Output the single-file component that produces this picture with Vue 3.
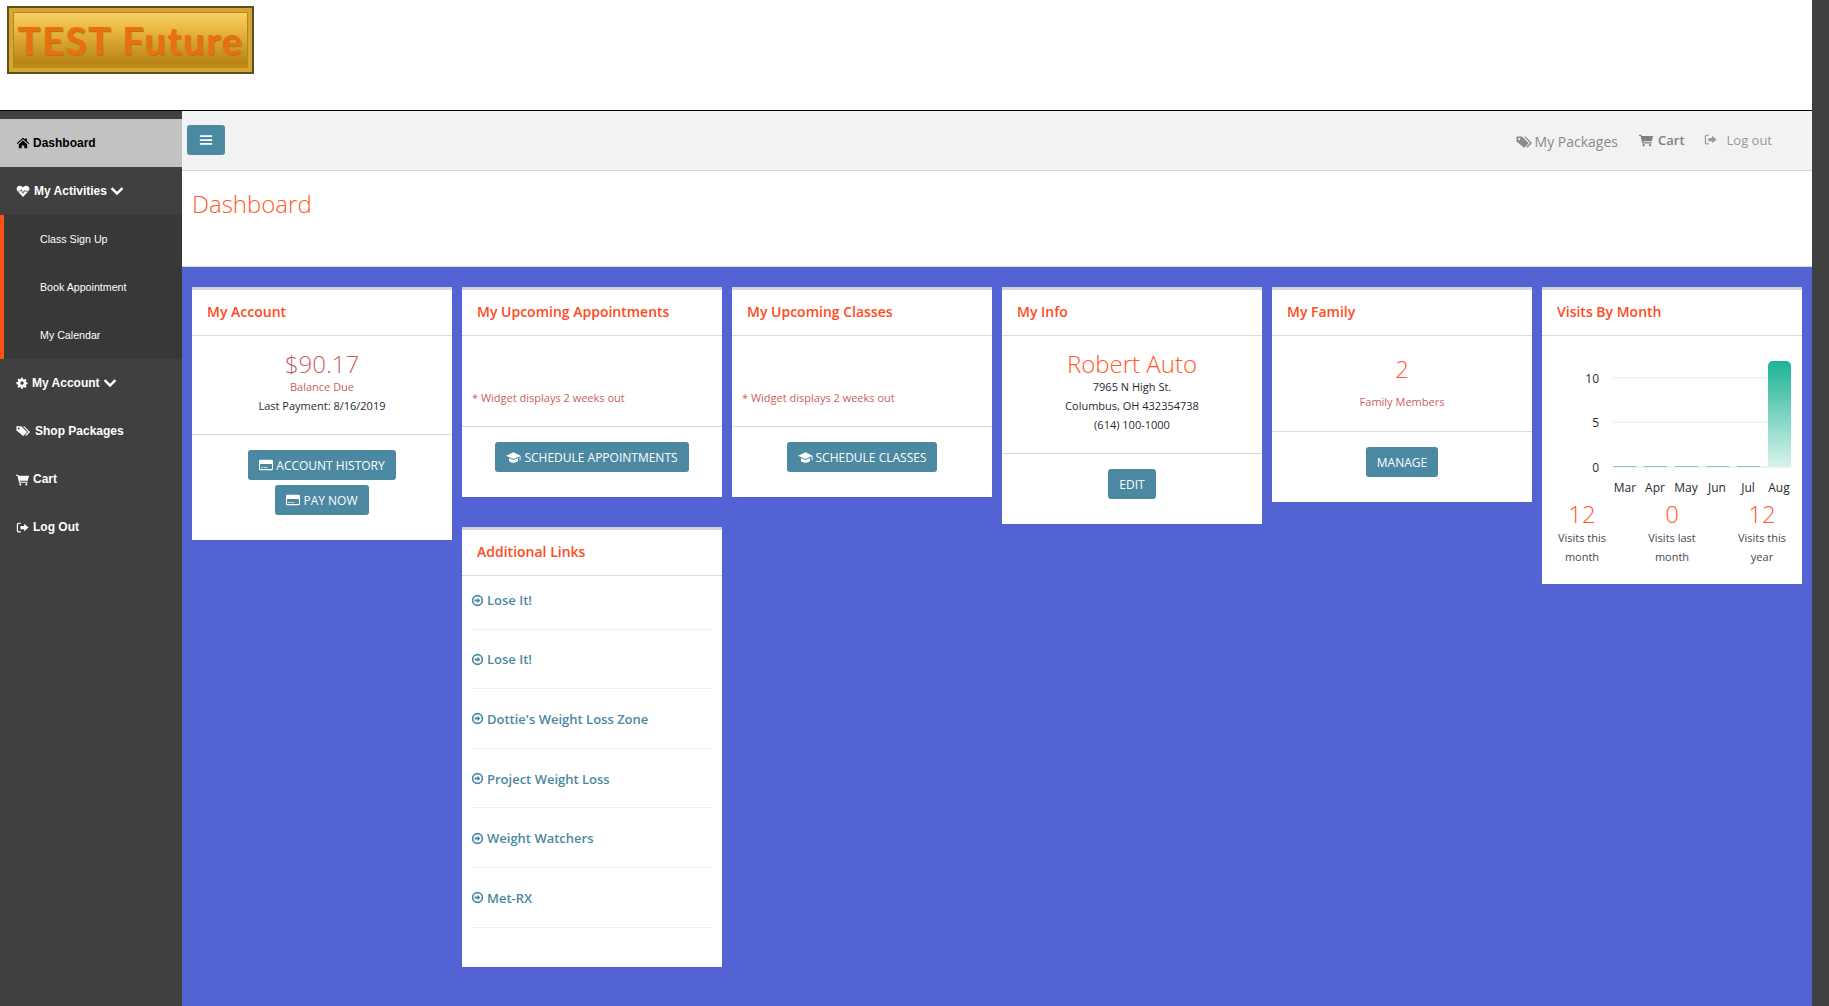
<template>
  <div class="page">
    <div class="main">
      <header class="brand">
        <div class="logo"><span>TEST Future</span></div>
      </header>

      <div class="shell">
        <aside class="sidebar">
          <a class="side-item active">
            <svg class="side-icon" viewBox="0 0 16 16"><path :d="icons.home" /></svg>
            <span>Dashboard</span>
          </a>
          <a class="side-item">
            <svg class="side-icon" viewBox="0 0 16 16"><path :d="icons.heartbeat" /></svg>
            <span>My Activities</span>
            <svg class="chevron" viewBox="0 0 16 16"><path :d="icons.chevron" /></svg>
          </a>
          <div class="submenu">
            <a v-for="item in subItems" :key="item" class="sub-item">{{ item }}</a>
          </div>
          <a class="side-item gap-account">
            <svg class="side-icon" viewBox="0 0 16 16"><path :d="icons.cog" /></svg>
            <span>My Account</span>
            <svg class="chevron" viewBox="0 0 16 16"><path :d="icons.chevron" /></svg>
          </a>
          <a class="side-item gap-shop">
            <svg class="side-icon" viewBox="0 0 16 16"><path :d="icons.tags" /></svg>
            <span>Shop Packages</span>
          </a>
          <a class="side-item gap-small">
            <svg class="side-icon" viewBox="0 0 16 16"><path :d="icons.cart" /></svg>
            <span>Cart</span>
          </a>
          <a class="side-item gap-small">
            <svg class="side-icon" viewBox="0 0 16 16"><path :d="icons.signOut" /></svg>
            <span>Log Out</span>
          </a>
        </aside>

        <div class="content">
          <div class="topbar">
            <button class="toggle">
              <svg viewBox="0 0 16 16" width="14" height="14"><path d="M1 2.500h14v2H1zM1 7h14v2H1zM1 11.500h14v2H1z" /></svg>
            </button>
            <nav class="top-nav">
              <a class="top-link packages">
                <svg viewBox="0 0 16 16" width="16" height="16"><path :d="icons.tags" /></svg>
                My Packages
              </a>
              <a class="top-link cart">
                <svg viewBox="0 0 16 16" width="14" height="14"><path :d="icons.cart" /></svg>
                <b>Cart</b>
              </a>
              <a class="top-link logout">
                <svg viewBox="0 0 16 16" width="13" height="13"><path :d="icons.signOut" /></svg>
                <span>Log out</span>
              </a>
            </nav>
          </div>

          <div class="title-bar">
            <h1>Dashboard</h1>
          </div>

          <div class="board">
            <div class="col">
              <section class="card">
                <h3>My Account</h3>
                <div class="card-body center account-body">
                  <div class="big muted">$90.17</div>
                  <div class="small muted">Balance Due</div>
                  <div class="small">Last Payment: 8/16/2019</div>
                </div>
                <div class="card-foot">
                  <button class="btn">
                    <svg viewBox="0 0 16 16"><path :d="icons.card" /></svg>ACCOUNT HISTORY
                  </button>
                  <button class="btn">
                    <svg viewBox="0 0 16 16"><path :d="icons.card" /></svg>PAY NOW
                  </button>
                </div>
              </section>
            </div>

            <div class="col">
              <section class="card">
                <h3>My Upcoming Appointments</h3>
                <div class="card-body note-body">
                  <div class="small muted">* Widget displays 2 weeks out</div>
                </div>
                <div class="card-foot">
                  <button class="btn cap-btn">
                    <svg viewBox="0 0 16 16"><path :d="icons.cap" /></svg>SCHEDULE APPOINTMENTS
                  </button>
                </div>
              </section>

              <section class="card links-card">
                <h3>Additional Links</h3>
                <div class="links">
                  <a v-for="(link, i) in links" :key="i" class="link-row">
                    <svg viewBox="0 0 16 16"><path :d="icons.arrowCircle" /></svg>{{ link }}
                  </a>
                </div>
              </section>
            </div>

            <div class="col">
              <section class="card">
                <h3>My Upcoming Classes</h3>
                <div class="card-body note-body">
                  <div class="small muted">* Widget displays 2 weeks out</div>
                </div>
                <div class="card-foot">
                  <button class="btn cap-btn">
                    <svg viewBox="0 0 16 16"><path :d="icons.cap" /></svg>SCHEDULE CLASSES
                  </button>
                </div>
              </section>
            </div>

            <div class="col">
              <section class="card">
                <h3>My Info</h3>
                <div class="card-body center info-body">
                  <div class="big orange">Robert Auto</div>
                  <div class="small">7965 N High St.</div>
                  <div class="small">Columbus, OH 432354738</div>
                  <div class="small">(614) 100-1000</div>
                </div>
                <div class="card-foot">
                  <button class="btn">EDIT</button>
                </div>
              </section>
            </div>

            <div class="col">
              <section class="card">
                <h3>My Family</h3>
                <div class="card-body center family-body">
                  <div class="big orange">2</div>
                  <div class="small muted">Family Members</div>
                </div>
                <div class="card-foot">
                  <button class="btn">MANAGE</button>
                </div>
              </section>
            </div>

            <div class="col">
              <section class="card visits-card">
                <h3>Visits By Month</h3>
                <svg class="chart" width="260" height="161" viewBox="0 0 260 161">
                  <defs>
                    <linearGradient id="barFill" x1="0" y1="0" x2="0" y2="1">
                      <stop offset="0" stop-color="#1ab394" />
                      <stop offset="1" stop-color="#d9f3ec" />
                    </linearGradient>
                  </defs>
                  <g v-for="t in ticks" :key="t.label">
                    <line x1="71" x2="250" :y1="t.y" :y2="t.y" stroke="#e6e6e6" />
                    <text x="57" :y="t.y + 4.5" text-anchor="end">{{ t.label }}</text>
                  </g>
                  <rect v-for="x in zeroBars" :key="x" :x="x" y="130" width="23" height="1" fill="#7fcdb9" />
                  <path d="M226 131V30a5 5 0 0 1 5-5h13a5 5 0 0 1 5 5v101z" fill="url(#barFill)" />
                  <text v-for="m in months" :key="m.label" :x="m.x" y="156" text-anchor="middle">{{ m.label }}</text>
                </svg>
                <div class="stats">
                  <div v-for="s in stats" :key="s.label" class="stat">
                    <div class="big orange">{{ s.value }}</div>
                    <div class="stat-label">{{ s.label }}</div>
                  </div>
                </div>
              </section>
            </div>
          </div>
        </div>
      </div>
    </div>
    <div class="edge"></div>
  </div>
</template>

<script setup>
const subItems = ['Class Sign Up', 'Book Appointment', 'My Calendar']

const links = [
  'Lose It!',
  'Lose It!',
  "Dottie's Weight Loss Zone",
  'Project Weight Loss',
  'Weight Watchers',
  'Met-RX'
]

const ticks = [
  { label: '10', y: 42 },
  { label: '5', y: 86 },
  { label: '0', y: 131 }
]

const zeroBars = [71, 102, 133, 164, 195]

const months = [
  { label: 'Mar', x: 83 },
  { label: 'Apr', x: 113 },
  { label: 'May', x: 144 },
  { label: 'Jun', x: 175 },
  { label: 'Jul', x: 206 },
  { label: 'Aug', x: 237 }
]

const stats = [
  { value: '12', label: 'Visits this month' },
  { value: '0', label: 'Visits last month' },
  { value: '12', label: 'Visits this year' }
]

const icons = {
  home: 'M8 2 0.800 8.200l.9 1L8 3.800l6.300 5.400.9-1L12.500 5.900V2.800h-2v1.300z M8 5.200l4.800 4.100V14H9.500v-3.200h-3V14H3.200V9.300z',
  heartbeat: 'M8 14.800 1.800 8.400C-.4 6 .7 2 4.300 2 6 2 7.200 3 8 4c.8-1 2-2 3.700-2 3.600 0 4.700 4 2.500 6.400z M1.800 7.600h3.100l1.100-1.900 2 3.900 1.400-2.700.7.700h4.100v1.100h-4.500l-.2-.3-1.500 3-2-4-.5.900H1.800z',
  chevron: 'M.8 5.600 2.800 3.600 8 8.800l5.200-5.200 2 2L8 12.800z',
  cog: 'M6.800 1h2.400l.3 2 1.200.5 1.700-1.200 1.700 1.700-1.200 1.700.5 1.200 2 .3v2.400l-2 .3-.5 1.200 1.200 1.700-1.700 1.700-1.700-1.200-1.200.5-.3 2H6.800l-.3-2-1.200-.5-1.700 1.200-1.700-1.700 1.200-1.700-.5-1.200-2-.3V6.800l2-.3.5-1.200-1.200-1.700 1.700-1.700 1.700 1.200 1.200-.5z M8 5.700a2.300 2.300 0 1 0 0 4.600 2.300 2.300 0 0 0 0-4.600z',
  tags: 'M.5 2.500H6L12.700 9.200 8.200 13.700.5 7.500z M3.200 4a1.100 1.100 0 1 0 0 2.200 1.100 1.100 0 0 0 0-2.200z M8 2.500h1.500L16 9l-4.500 4.700-1.100-1L14 9z',
  cart: 'M0 2h2.800l.4 1.500H16l-1.500 6H4.700l.3 1.200h9.500V12H3.800L1.800 3.300H0z M5.300 12.700a1.300 1.300 0 1 1 0 2.600 1.300 1.300 0 0 1 0-2.600z M12.700 12.700a1.300 1.300 0 1 1 0 2.600 1.300 1.300 0 0 1 0-2.600z',
  signOut: 'M6 2H3a2 2 0 0 0-2 2v8a2 2 0 0 0 2 2h3v-1.500H3a.5.5 0 0 1-.5-.5V4a.5.5 0 0 1 .5-.5h3z M10 3.500 15.500 8 10 12.500V10H5.500V6H10z',
  card: 'M1.500 2h13A1.500 1.500 0 0 1 16 3.500v9a1.500 1.500 0 0 1-1.500 1.500h-13A1.500 1.500 0 0 1 0 12.500v-9A1.500 1.500 0 0 1 1.500 2z M1.200 6.800v5.600c0 .2.100.3.300.3h13c.2 0 .3-.1.300-.3V6.800z M2.500 10.500h2.500v1H2.500z M6 10.500h3.500v1H6z',
  cap: 'M8 2.500 0 6l8 3.500 6.500-2.800V11h1V6z M3.200 8.600v2.900c0 1 2.200 2 4.800 2s4.800-1 4.800-2V8.600L8 10.700z',
  arrowCircle: 'M8 1a7 7 0 1 0 0 14A7 7 0 0 0 8 1z M8 3a5 5 0 1 1 0 10A5 5 0 0 1 8 3z M8 4.500 11.500 8 8 11.500V9.200H4.500V6.800H8z'
}
</script>

<style scoped>
.page {
  display: flex;
  width: 1829px;
  height: 1006px;
  overflow: hidden;
  background: #fff;
  font-family: "Open Sans", "Liberation Sans", sans-serif;
}

.main {
  width: 1812px;
  display: flex;
  flex-direction: column;
}

.edge {
  width: 17px;
  background: #404040;
}

.brand {
  height: 111px;
  padding: 6px 0 0 7px;
  box-sizing: border-box;
  border-bottom: 1px solid #000;
}

.logo {
  width: 247px;
  height: 68px;
  box-sizing: border-box;
  border: 2px solid #5f4f25;
  background: linear-gradient(#fbd873, #e9b63f 35%, #b98416 85%, #c8951f);
  box-shadow: inset 0 0 0 4px #d7a630, inset 0 0 0 5px #b5851f;
  display: flex;
  align-items: center;
  justify-content: center;
}

.logo span {
  font-family: Lato, sans-serif;
  font-weight: bold;
  font-size: 38px;
  letter-spacing: 1.7px;
  line-height: 1;
  color: #e8700f;
  text-shadow: 1px 1px 1px #b0701a;
  white-space: nowrap;
}

.shell {
  flex: 1;
  display: flex;
  min-height: 0;
}

.sidebar {
  width: 182px;
  flex: none;
  padding-top: 8px;
  box-sizing: border-box;
  background: #404040;
  font-family: "Liberation Sans", Arial, sans-serif;
}

.side-item {
  height: 48px;
  display: flex;
  align-items: center;
  padding-left: 16px;
  font-size: 12px;
  font-weight: bold;
  color: #fff;
}

.side-item.active {
  background: #c2c2c2;
  color: #000;
}

.side-icon {
  width: 14px;
  height: 14px;
  margin-right: 4px;
  fill: currentColor;
  fill-rule: evenodd;
  flex: none;
}

.active .side-icon {
  margin-right: 3px;
}

.gap-account .side-icon {
  width: 12px;
  height: 12px;
  margin-right: 4px;
}

.gap-shop .side-icon {
  margin-right: 5px;
}

.gap-small .side-icon {
  width: 13px;
  height: 13px;
}

.chevron {
  width: 14px;
  height: 14px;
  margin-left: 3.5px;
  fill: currentColor;
}

.submenu {
  border-left: 4px solid #ff5214;
  background: #383838;
}

.sub-item {
  height: 48px;
  display: flex;
  align-items: center;
  padding-left: 36px;
  font-size: 10.67px;
  color: #fff;
}

.content {
  flex: 1;
  min-width: 0;
  display: flex;
  flex-direction: column;
}

.topbar {
  height: 60px;
  box-sizing: border-box;
  background: #f2f2f2;
  border-bottom: 1px solid #d2d6de;
  display: flex;
  align-items: flex-start;
  justify-content: space-between;
  padding: 14px 40px 0 5px;
}

.toggle {
  width: 38px;
  height: 30px;
  padding: 0;
  border: none;
  border-radius: 3px;
  background: #4b88a2;
  display: flex;
  align-items: center;
  justify-content: center;
}

.toggle svg {
  fill: #fff;
}

.top-nav {
  display: flex;
  align-items: center;
  color: #8c8c8c;
  padding-top: 3px;
}

.top-link {
  display: flex;
  align-items: center;
  font-size: 13px;
}

.top-link svg {
  fill: currentColor;
  fill-rule: evenodd;
  flex: none;
}

.packages {
  font-size: 14px;
  gap: 3px;
  color: #8a8a8a;
  margin-top: 4px;
}

.cart {
  margin-left: 21px;
  gap: 5px;
  color: #808080;
}

.cart b {
  font-weight: 600;
}

.logout {
  margin-left: 19px;
  gap: 10px;
  color: #999;
}

.title-bar {
  height: 96px;
  box-sizing: border-box;
  background: #fff;
  border-bottom: 1px solid #d2d6de;
  padding: 15px 10px 0;
}

.title-bar h1 {
  margin: 0;
  font-size: 24px;
  font-weight: 300;
  line-height: 36px;
  color: #ff5a2b;
}

.board {
  flex: 1;
  display: flex;
  align-items: flex-start;
  gap: 10px;
  padding: 20px 10px 0;
  background: #5363d3;
}

.col {
  width: 260px;
  flex: none;
}

.card {
  background: #fff;
  border-top: 3px solid #d2d6de;
}

.card h3 {
  margin: 0;
  height: 45px;
  padding: 0 15px;
  border-bottom: 1px solid #d9d9d9;
  font-size: 14px;
  font-weight: 600;
  line-height: 44px;
  color: #ff4a1c;
}

.card-body {
  box-sizing: border-box;
  border-bottom: 1px solid #d9d9d9;
}

.center {
  text-align: center;
}

.account-body {
  height: 99px;
  padding-top: 14.5px;
}

.note-body {
  height: 91px;
  padding: 52px 10px 0;
}

.info-body {
  height: 118px;
  padding-top: 14.5px;
}

.family-body {
  height: 96px;
  padding-top: 19.5px;
}

.family-body .big {
  margin-bottom: 10.5px;
}

.big {
  font-size: 24px;
  font-weight: 300;
  line-height: 26px;
}

.small {
  font-size: 11px;
  line-height: 19px;
  color: #1f2933;
}

.muted,
.small.muted {
  color: #c9605f;
}

.orange {
  color: #ff5a2b;
}

.card-foot {
  padding: 15px 0 20px;
  display: flex;
  flex-direction: column;
  align-items: center;
}

.btn {
  height: 30px;
  padding: 0 11px;
  margin: 0 0 5px;
  border: none;
  border-radius: 3px;
  background: #4b88a2;
  color: #fff;
  font-family: inherit;
  font-size: 12px;
  display: flex;
  align-items: center;
}

.btn svg {
  width: 14px;
  height: 14px;
  margin-right: 3px;
  fill: #fff;
  fill-rule: evenodd;
}

.cap-btn svg {
  width: 15px;
  height: 15px;
}

.links-card {
  margin-top: 30px;
}

.links {
  padding: 0 10px 39px;
}

.link-row {
  display: flex;
  align-items: center;
  height: 59.6px;
  box-sizing: border-box;
  padding-top: 1px;
  border-bottom: 1px solid #eee;
  font-size: 13px;
  font-weight: 600;
  color: #4b88a2;
}

.link-row:first-child {
  height: 53.6px;
  padding-bottom: 5px;
}

.link-row svg {
  width: 13px;
  height: 13px;
  margin-right: 3px;
  margin-left: -1px;
  fill: currentColor;
  fill-rule: evenodd;
}

.chart {
  display: block;
}

.chart text {
  font-size: 12px;
  fill: #1f2933;
}

.stats {
  display: grid;
  grid-template-columns: repeat(3, 90px);
  margin: 0 -5px;
  text-align: center;
  padding: 3.5px 0 18px;
}

.stat-label {
  padding: 1px 15px 0;
  font-size: 11px;
  line-height: 19px;
  color: #3f4a54;
}
</style>

<style>
html,
body {
  margin: 0;
  padding: 0;
}
</style>
